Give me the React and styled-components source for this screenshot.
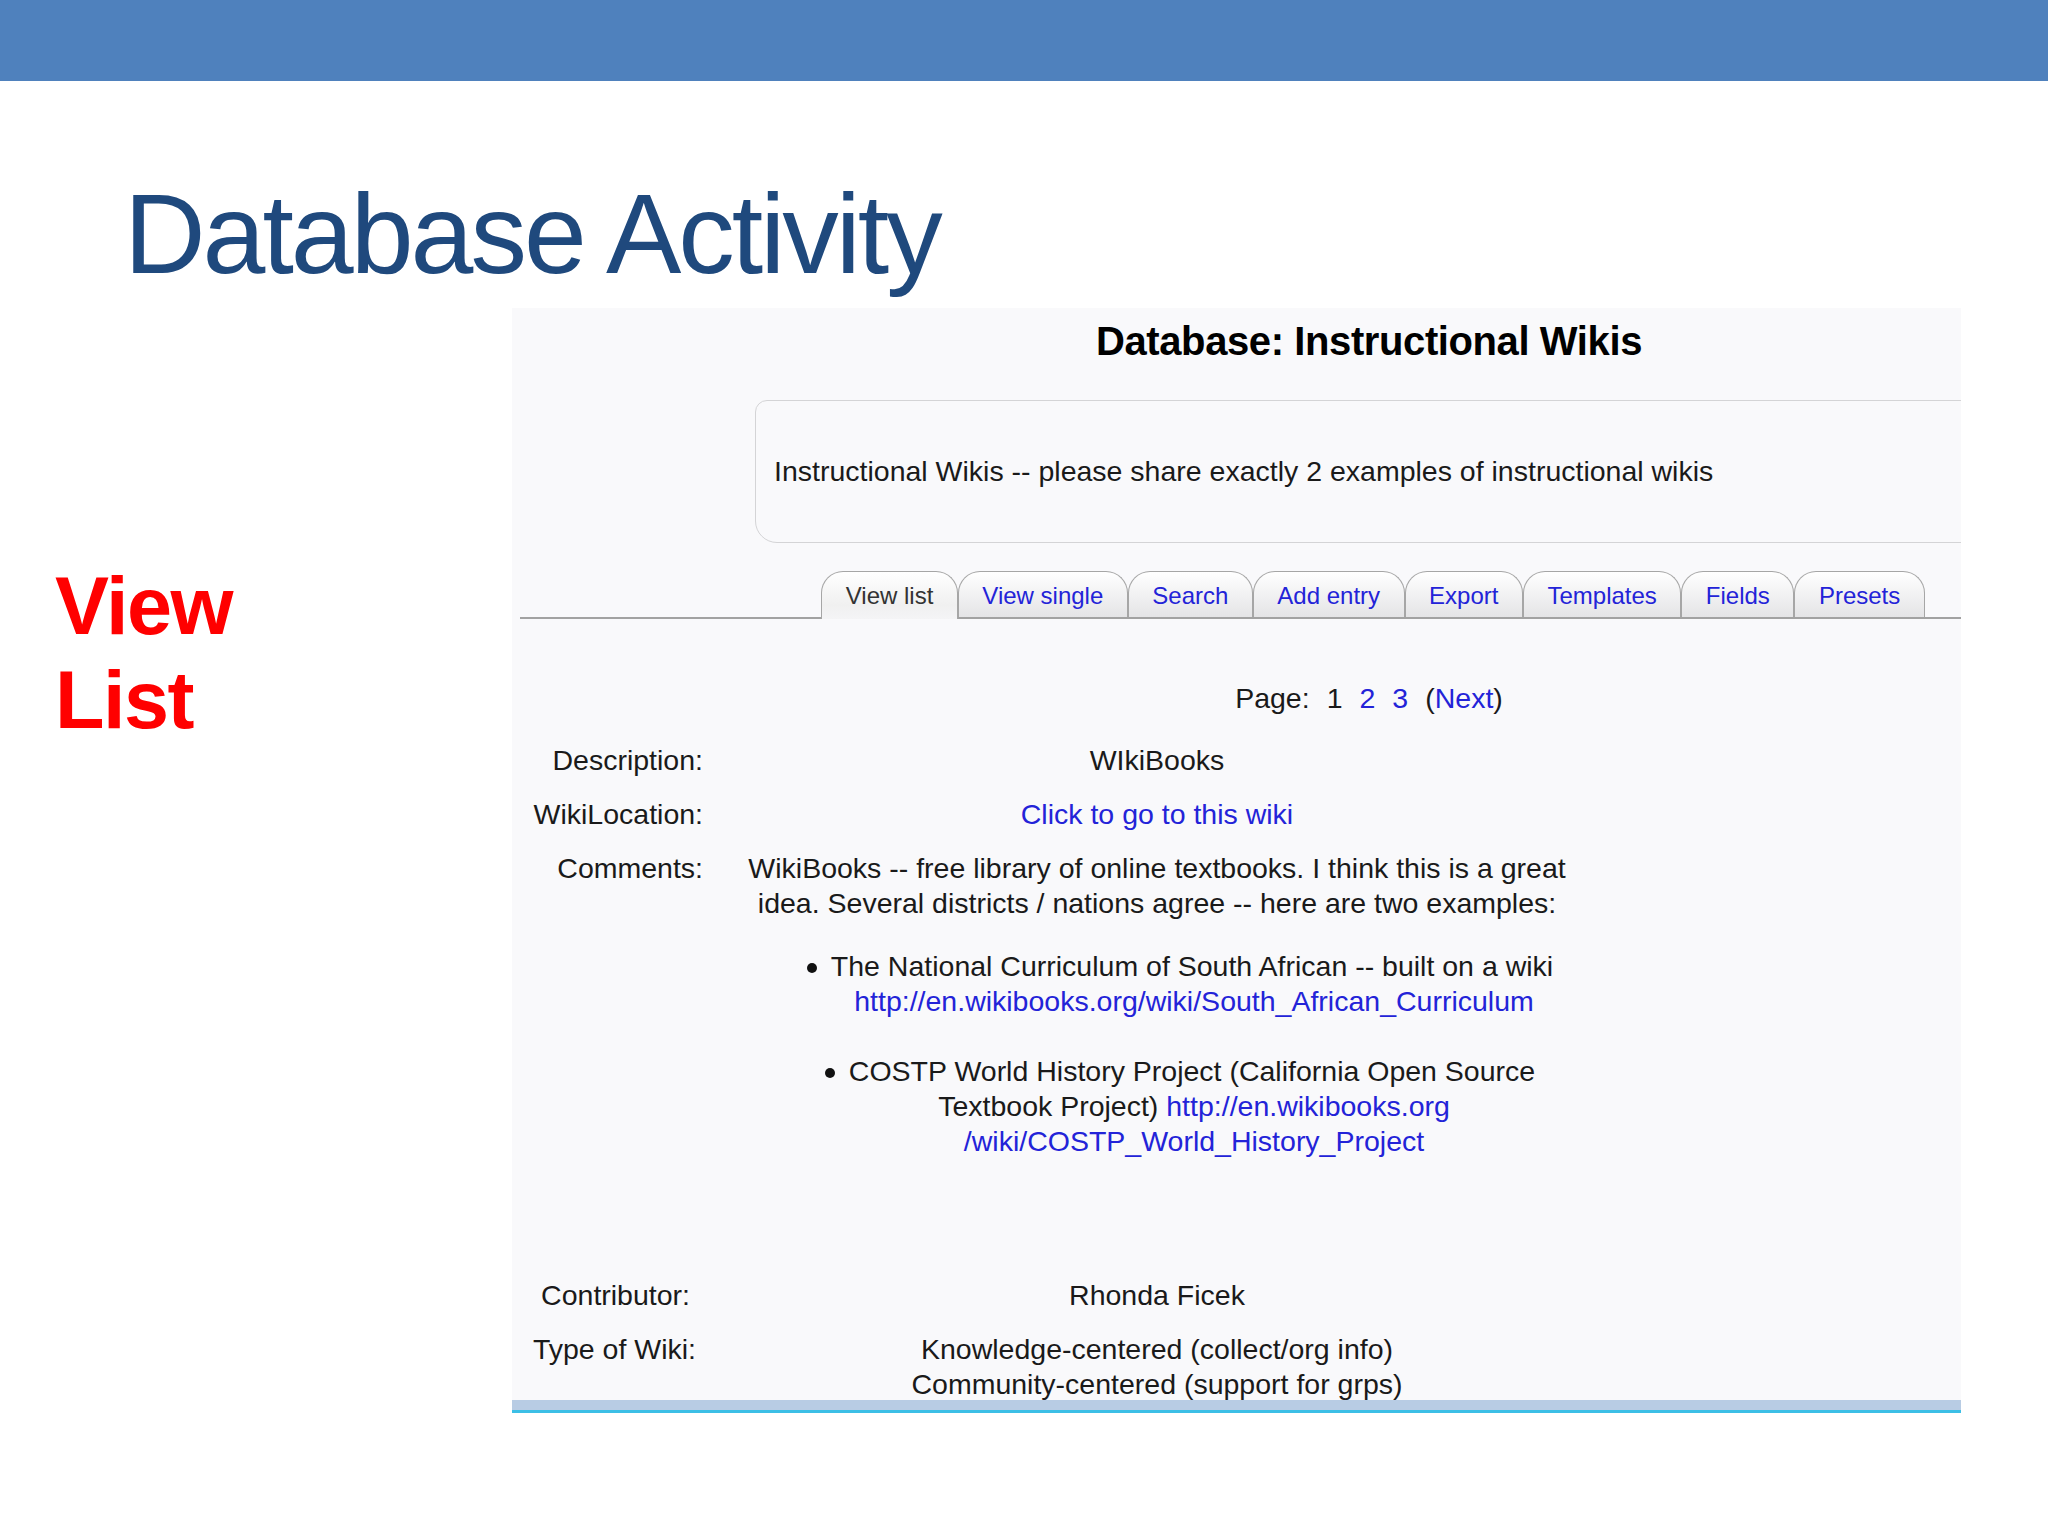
import React from 'react';
import styled, {createGlobalStyle} from 'styled-components';

const GlobalStyle = createGlobalStyle`
  html, body {
    margin: 0;
    padding: 0;
    background: #ffffff;
  }
  body {
    font-family: "Liberation Sans", Arial, sans-serif;
  }
`;

const Slide = styled.div`
  width: 2048px;
  height: 1536px;
  background: #ffffff;
  overflow: hidden;
  display: flex;
  flex-direction: column;
`;

const TopBar = styled.div`
  height: 81px;
  flex-shrink: 0;
  background: #4f81bd;
`;

const Title = styled.h1`
  margin: 97px 0 0 124px;
  font-family: "Liberation Sans", Arial, sans-serif;
  font-weight: 400;
  font-size: 113px;
  line-height: 113px;
  letter-spacing: -3px;
  color: #1f497d;
  white-space: nowrap;
`;

const Body = styled.div`
  display: flex;
  margin-top: 17px;
`;

const Side = styled.div`
  width: 512px;
  flex-shrink: 0;
  box-sizing: border-box;
  padding: 251px 0 0 55px;
`;

const SideLabel = styled.div`
  font-weight: 700;
  font-size: 81px;
  line-height: 94px;
  letter-spacing: -1.5px;
  color: #ff0000;
`;

// the pasted browser screenshot
const Shot = styled.div`
  width: 1449px;
  height: 1105px;
  flex-shrink: 0;
  background: #f9f9fb;
  display: flex;
  flex-direction: column;
  overflow: hidden;
`;

const Page = styled.div`
  flex: 1;
  min-height: 0;
  overflow: hidden;
`;

const PageInner = styled.div`
  width: 1714px;
  color: #1a1a1a;
  font-size: 28.5px;
  line-height: 35px;
`;

const BottomBand = styled.div`
  height: 10px;
  flex-shrink: 0;
  background: #b8cce4;
  border-bottom: 3px solid #3cbfe6;
`;

const Heading = styled.h2`
  margin: 0;
  padding-top: 10px;
  text-align: center;
  font-size: 40px;
  line-height: 46px;
  font-weight: 700;
  letter-spacing: -0.4px;
  color: #000000;
`;

const Intro = styled.div`
  width: 1228px;
  height: 143px;
  box-sizing: border-box;
  margin: 36px auto 0;
  padding-left: 18px;
  display: flex;
  align-items: center;
  border: 1.5px solid #d4d4d6;
  border-radius: 12px 0 0 22px;
  white-space: nowrap;
`;

const TabBar = styled.div`
  display: flex;
  justify-content: center;
  align-items: flex-end;
  margin: 28px 0 0 8px;
  border-bottom: 2px solid #a2a2a2;
`;

const Tab = styled.div`
  position: relative;
  box-sizing: border-box;
  height: ${p => (p.$active ? 48 : 46)}px;
  margin-bottom: ${p => (p.$active ? -2 : 0)}px;
  padding: 10px 23.5px 0;
  font-size: 24px;
  line-height: 28px;
  white-space: nowrap;
  color: ${p => (p.$active ? '#333333' : '#2323d8')};
  border: 1.5px solid #a6a6a6;
  border-bottom: none;
  border-radius: 22px 22px 0 0;
  background: ${p => (p.$active
    ? 'linear-gradient(#ffffff, #f0f0f0 70%, #f4f4f6)'
    : 'linear-gradient(#ffffff, #e4e4e6)')};
`;

const Pager = styled.div`
  display: flex;
  justify-content: center;
  gap: 17px;
  margin-top: 62px;
`;

const Link = styled.span`
  color: #2323d8;
`;

const Record = styled.div`
  display: grid;
  grid-template-columns: 191px 850px;
  column-gap: 29px;
  row-gap: 19px;
  margin-top: ${p => p.$top}px;
`;

const Label = styled.div`
  text-align: right;
  white-space: nowrap;
  padding-right: ${p => p.$inset || 0}px;
`;

const Value = styled.div`
  text-align: center;
`;

const Para = styled.p`
  margin: 0;
`;

const Bullets = styled.ul`
  margin: 28px 0 100px;
  padding-left: 74px;
  list-style: none;
  text-align: center;
`;

const Bullet = styled.li`
  &::before {
    content: "";
    display: inline-block;
    width: 10px;
    height: 10px;
    margin: 0 14px 0 -28px;
    border-radius: 50%;
    background: #111111;
    vertical-align: middle;
  }
  & + & {
    margin-top: 35px;
  }
`;

const tabs = ['View list', 'View single', 'Search', 'Add entry', 'Export', 'Templates', 'Fields', 'Presets'];

const App = () => {
    return (
        <Slide>
            <GlobalStyle/>
            <TopBar/>
            <Title>Database Activity</Title>
            <Body>
                <Side>
                    <SideLabel>View<br/>List</SideLabel>
                </Side>
                <Shot>
                    <Page>
                        <PageInner>
                            <Heading>Database: Instructional Wikis</Heading>
                            <Intro>Instructional Wikis -- please share exactly 2 examples of instructional wikis</Intro>
                            <TabBar>
                                {tabs.map((t, i) => (
                                    <Tab key={t} $active={i === 0}>{t}</Tab>
                                ))}
                            </TabBar>
                            <Pager>
                                <span>Page:</span>
                                <span>1</span>
                                <Link>2</Link>
                                <Link>3</Link>
                                <span>(<Link>Next</Link>)</span>
                            </Pager>

                            <Record $top={27}>
                                <Label>Description:</Label>
                                <Value>WIkiBooks</Value>

                                <Label>WikiLocation:</Label>
                                <Value><Link>Click to go to this wiki</Link></Value>

                                <Label>Comments:</Label>
                                <Value>
                                    <Para>WikiBooks -- free library of online textbooks. I think this is a great idea. Several districts / nations agree -- here are two examples:</Para>
                                    <Bullets>
                                        <Bullet>The National Curriculum of South African -- built on a wiki <Link>http://en.wikibooks.org/wiki/South_African_Curriculum</Link></Bullet>
                                        <Bullet>COSTP World History Project (California Open Source Textbook Project) <Link>http://en.wikibooks.org<wbr/>/wiki/COSTP_World_History_Project</Link></Bullet>
                                    </Bullets>
                                </Value>

                                <Label $inset={13}>Contributor:</Label>
                                <Value>Rhonda Ficek</Value>

                                <Label $inset={7}>Type of Wiki:</Label>
                                <Value>Knowledge-centered (collect/org info)<br/>Community-centered (support for grps)</Value>
                            </Record>
                        </PageInner>
                    </Page>
                    <BottomBand/>
                </Shot>
            </Body>
        </Slide>
    );
};

export default App;
